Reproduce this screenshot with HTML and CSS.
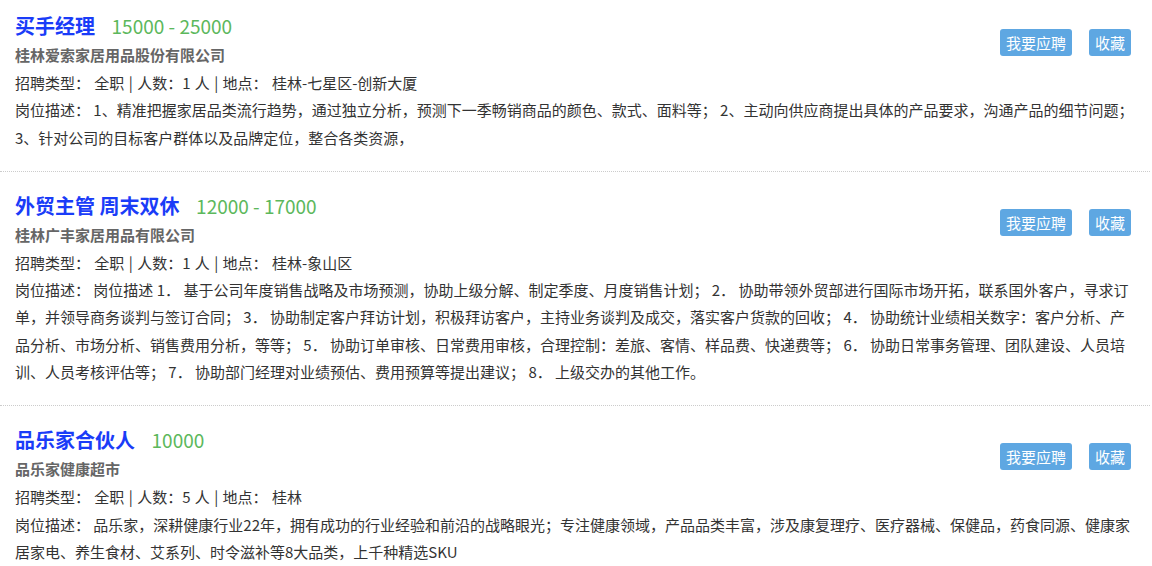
FILE: index.html
```html
<!DOCTYPE html>
<html>
<head>
    <title>职位列表</title>
    <link rel="stylesheet" href="styles.css">
</head>
<body>
    <div class="job-list">
        <div class="job-item">
            <div class="job-actions">
                <a class="btn" href="#">我要应聘</a>
                <a class="btn" href="#">收藏</a>
            </div>
            <h3 class="job-title">买手经理 <span class="salary">15000 - 25000</span></h3>
            <p class="company">桂林爱索家居用品股份有限公司</p>
            <p class="meta">招聘类型： 全职 | 人数：1 人 | 地点： 桂林-七星区-创新大厦</p>
            <p class="desc">岗位描述： 1、精准把握家居品类流行趋势，通过独立分析，预测下一季畅销商品的颜色、款式、面料等； 2、主动向供应商提出具体的产品要求，沟通产品的细节问题； 3、针对公司的目标客户群体以及品牌定位，整合各类资源，</p>
        </div>
        <div class="job-item">
            <div class="job-actions">
                <a class="btn" href="#">我要应聘</a>
                <a class="btn" href="#">收藏</a>
            </div>
            <h3 class="job-title">外贸主管 周末双休 <span class="salary">12000 - 17000</span></h3>
            <p class="company">桂林广丰家居用品有限公司</p>
            <p class="meta">招聘类型： 全职 | 人数：1 人 | 地点： 桂林-象山区</p>
            <p class="desc">岗位描述： 岗位描述 1． 基于公司年度销售战略及市场预测，协助上级分解、制定季度、月度销售计划； 2． 协助带领外贸部进行国际市场开拓，联系国外客户，寻求订单，并领导商务谈判与签订合同； 3． 协助制定客户拜访计划，积极拜访客户，主持业务谈判及成交，落实客户货款的回收； 4． 协助统计业绩相关数字：客户分析、产品分析、市场分析、销售费用分析，等等； 5． 协助订单审核、日常费用审核，合理控制：差旅、客情、样品费、快递费等； 6． 协助日常事务管理、团队建设、人员培训、人员考核评估等； 7． 协助部门经理对业绩预估、费用预算等提出建议； 8． 上级交办的其他工作。</p>
        </div>
        <div class="job-item">
            <div class="job-actions">
                <a class="btn" href="#">我要应聘</a>
                <a class="btn" href="#">收藏</a>
            </div>
            <h3 class="job-title">品乐家合伙人 <span class="salary">10000</span></h3>
            <p class="company">品乐家健康超市</p>
            <p class="meta">招聘类型： 全职 | 人数：5 人 | 地点： 桂林</p>
            <p class="desc">岗位描述： 品乐家，深耕健康行业22年，拥有成功的行业经验和前沿的战略眼光；专注健康领域，产品品类丰富，涉及康复理疗、医疗器械、保健品，药食同源、健康家居家电、养生食材、艾系列、时令滋补等8大品类，上千种精选SKU</p>
        </div>
    </div>
</body>
</html>
```

FILE: styles.css
```css
body {
    font-family: "Noto Sans CJK SC", "Noto Sans", sans-serif;
    background-color: #fff;
    color: #333;
    margin: 0;
    padding: 0;
}

.job-list {
    width: 1150px;
}

.job-item {
    padding: 19px 12px 20px 15px;
    border-bottom: 1px dotted #ccc;
}

.job-item:first-child {
    padding-top: 11px;
}

.job-actions {
    float: right;
    display: flex;
    gap: 17px;
    margin-top: 18px;
    margin-right: 7px;
}

.btn {
    display: block;
    height: 27px;
    line-height: 27px;
    padding: 0 6px;
    font-size: 15px;
    color: #fff;
    background-color: #5ea7e2;
    border-radius: 3px;
    text-decoration: none;
}

.job-title {
    margin: 0;
    font-size: 20px;
    line-height: 30px;
    font-weight: bold;
    color: #1a3cf8;
}

.salary {
    margin-left: 12px;
    font-size: 19px;
    font-weight: normal;
    color: #5cb85c;
}

.company {
    margin: 0;
    font-size: 15px;
    line-height: 28px;
    font-weight: bold;
    color: #666;
}

.meta,
.desc {
    margin: 0;
    font-size: 15px;
    line-height: 27.3px;
}

.meta {
    word-spacing: 1px;
}
```
